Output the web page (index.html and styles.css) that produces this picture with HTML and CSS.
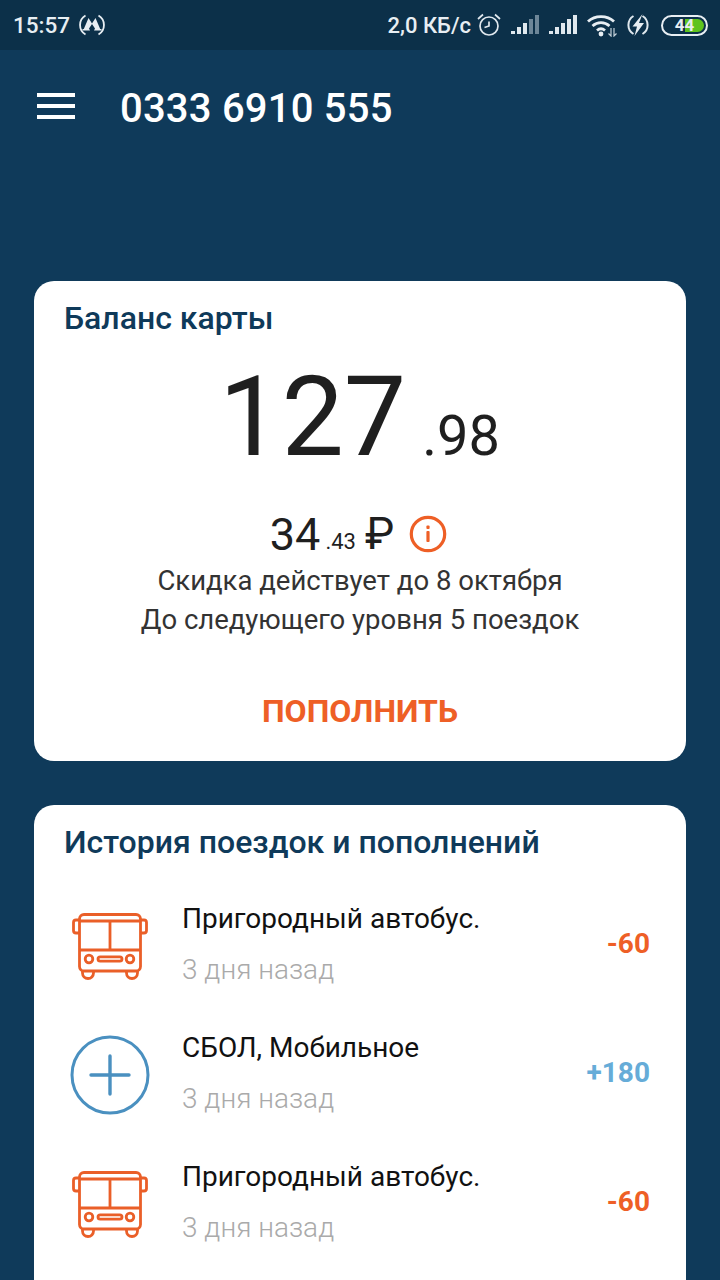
FILE: index.html
```html
<!DOCTYPE html>
<html lang="ru">
<head>
<meta charset="utf-8">
<title>Баланс карты</title>
<link rel="stylesheet" href="styles.css">
</head>
<body>
<div class="screen">
  <div class="status">
    <span class="time">15:57</span>
    <svg class="metro" width="28" height="24" viewBox="0 0 28 24"><path d="M7.500 2.500A11 11 0 0 0 7.500 21.500M20.500 2.500A11 11 0 0 1 20.500 21.500" fill="none" stroke="#e8eef3" stroke-width="1.800"/><path d="M4.500 17.500h7.500l-1-2 3-4.500 3 4.500-1 2h7.500v-1.500h-1.300L17.500 5 14 10.500 10.500 5 5.800 16H4.500z" fill="#e8eef3"/></svg>
    <span class="spacer"></span>
    <span class="speed">2,0 КБ/с</span>
    <svg class="ic-alarm" width="26" height="26" viewBox="0 0 26 26"><circle cx="13" cy="14" r="9" fill="none" stroke="#e0e8ee" stroke-width="1.700"/><path d="M13 9.500v4.500l-4.500 1.500M2 7L7 2.500M24 7L19 2.500" fill="none" stroke="#e0e8ee" stroke-width="1.700"/></svg>
    <svg class="ic-signal1" width="28" height="20" viewBox="0 0 28 20"><g fill="#e0e8ee"><rect x="0" y="16" width="4" height="3"/><rect x="6" y="12" width="4" height="7"/><rect x="12" y="8" width="4" height="11"/></g><g fill="#6d8698"><rect x="18" y="4" width="4" height="15"/><rect x="24" y="0" width="4" height="19"/></g></svg>
    <svg class="ic-signal2" width="28" height="20" viewBox="0 0 28 20"><g fill="#e0e8ee"><rect x="0" y="16" width="4" height="3"/><rect x="6" y="12" width="4" height="7"/><rect x="12" y="8" width="4" height="11"/><rect x="18" y="4" width="4" height="15"/><rect x="24" y="0" width="4" height="19"/></g></svg>
    <svg class="ic-wifi" width="30" height="24" viewBox="0 0 30 24"><path d="M1 8.500C8 2 20 2 27 8.500M5.500 13C10.500 8.500 17.500 8.500 22.500 13M10 17.500c2.800-2.400 5.200-2.400 8 0" fill="none" stroke="#e8eef3" stroke-width="2.800"/><circle cx="14" cy="21" r="2.400" fill="#e8eef3"/><path d="M24 15v8l-2.500-2.500M27 15v8l2.500-2.500" fill="none" stroke="#c4d0d9" stroke-width="1.200"/></svg>
    <svg class="ic-charge" width="24" height="24" viewBox="0 0 24 24"><path d="M7.500 3A10.500 10.500 0 0 0 7.500 21M16.500 3A10.500 10.500 0 0 1 16.500 21" fill="none" stroke="#e0e8ee" stroke-width="2"/><path d="M16.500 1L6.500 13.500h4.500L8.500 23l9.500-13h-5z" fill="#e8eef3"/></svg>
    <span class="battery"><span class="battery-fill"></span><span class="battery-num">44</span></span>
  </div>

  <header class="appbar">
    <span class="burger"><i></i><i></i><i></i></span>
    <h1 class="number">0333 6910 555</h1>
  </header>

  <section class="card balance">
    <h2 class="card-title">Баланс карты</h2>
    <div class="amount"><span class="amount-main">127</span><span class="amount-frac">.98</span></div>
    <div class="rate">
      <span class="rate-main">34</span><span class="rate-frac">.43</span><span class="rate-cur">₽</span>
      <svg class="info" width="38" height="38" viewBox="0 0 38 38"><circle cx="19" cy="19" r="16.700" fill="none" stroke="#ee5f26" stroke-width="3.200"/><rect x="17.400" y="10.500" width="3.200" height="3.500" rx="1" fill="#ee5f26"/><rect x="17.400" y="16" width="3.200" height="11" rx="1" fill="#ee5f26"/></svg>
    </div>
    <p class="note">Скидка действует до 8 октября</p>
    <p class="note">До следующего уровня 5 поездок</p>
    <div class="topup">ПОПОЛНИТЬ</div>
  </section>

  <section class="card history">
    <h2 class="card-title">История поездок и пополнений</h2>
    <ul class="list">
      <li class="row">
        <svg class="row-icon" width="80" height="80" viewBox="0 0 80 80"><use href="#bus"/></svg>
        <div class="row-text"><div class="row-name">Пригородный автобус.</div><div class="row-date">3 дня назад</div></div>
        <div class="row-sum minus">-60</div>
      </li>
      <li class="row">
        <svg class="row-icon" width="80" height="80" viewBox="0 0 80 80"><circle cx="40" cy="40" r="38" fill="none" stroke="#4a90c0" stroke-width="3"/><path d="M21 40h38M40 21v38" fill="none" stroke="#4a90c0" stroke-width="3.400" stroke-linecap="round"/></svg>
        <div class="row-text"><div class="row-name">СБОЛ, Мобильное</div><div class="row-date">3 дня назад</div></div>
        <div class="row-sum plus">+180</div>
      </li>
      <li class="row">
        <svg class="row-icon" width="80" height="80" viewBox="0 0 80 80"><use href="#bus"/></svg>
        <div class="row-text"><div class="row-name">Пригородный автобус.</div><div class="row-date">3 дня назад</div></div>
        <div class="row-sum minus">-60</div>
      </li>
    </ul>
  </section>
</div>
<svg class="defs" width="0" height="0"><defs><g id="bus" fill="none" stroke="#ea5f28" stroke-width="2.800"><path d="M9.500 13V13a4.500 4.500 0 0 1 4.500-4.500h52A4.500 4.500 0 0 1 70.500 13v47.500a4.500 4.500 0 0 1-4.500 4.500H14a4.500 4.500 0 0 1-4.500-4.500z"/><path d="M9.500 15h61M40 15v29M9.500 44h61"/><path d="M9.500 14H6a2.500 2.500 0 0 0-2.500 2.500v8A2.500 2.500 0 0 0 6 27h3.500M70.500 14H74a2.500 2.500 0 0 1 2.500 2.500v8A2.500 2.500 0 0 1 74 27h-3.500"/><circle cx="19" cy="53" r="3.800"/><circle cx="60" cy="53" r="3.800"/><rect x="28" y="50.800" width="24" height="4.400" rx="2.200"/><path d="M12.500 65v2a5.500 5.500 0 0 0 11 0v-2M56.500 65v2a5.500 5.500 0 0 0 11 0v-2"/></g></defs></svg>
</body>
</html>
```
FILE: styles.css
```css
* { box-sizing: border-box; }
html, body { margin: 0; padding: 0; }
body { background: #0f3a5a; font-family: Roboto, "Liberation Sans", sans-serif; overflow: hidden; }
.screen { width: 720px; height: 1280px; overflow: hidden; background: #0f3a5a; }
.defs { display: block; }

.status { height: 50px; background: #0c3049; display: flex; align-items: center; padding: 0 12px 0 13px; color: #e8eef3; }
.time { font-size: 22.500px; font-weight: 500; }
.metro { margin-left: 8px; }
.spacer { flex: 1; }
.speed { font-size: 22px; font-weight: 500; }
.ic-alarm { margin-left: 5px; }
.ic-signal1 { margin-left: 9px; }
.ic-signal2 { margin-left: 10px; }
.ic-wifi { margin-left: 10px; }
.ic-charge { margin-left: 9px; }
.battery { position: relative; margin-left: 11px; width: 47px; height: 21px; border: 2px solid #e8eef3; border-radius: 11px; overflow: hidden; display: block; }
.battery-fill { position: absolute; left: 22px; top: 2px; bottom: 2px; right: 2px; background: #5fc31e; border-radius: 0 8px 8px 0; }
.battery-num { position: absolute; left: 0; right: 0; top: 0; bottom: 0; text-align: center; font-size: 17px; line-height: 17px; font-weight: 700; color: #e8eef3; }

.appbar { height: 115px; display: flex; align-items: center; padding-left: 37px; }
.burger { width: 38px; display: flex; flex-direction: column; gap: 7px; margin-top: -4px; }
.burger i { display: block; height: 4px; background: #fff; }
.number { margin: 2px 0 0 45px; font-size: 40px; font-weight: 500; color: #fff; letter-spacing: .2px; }

.card { margin: 0 34px; background: #fff; border-radius: 20px; }
.balance { margin-top: 116px; height: 480px; padding: 20px 30px 0; text-align: center; }
.card-title { margin: 0; font-size: 32px; line-height: 35px; font-weight: 500; color: #0f3a5a; text-align: left; }
.amount { margin-top: 26px; height: 110px; line-height: 110px; color: #1f1f1f; white-space: nowrap; padding-right: 1px; }
.amount-main { font-size: 111px; font-weight: 400; }
.amount-frac { font-size: 56px; font-weight: 400; margin-left: 16px; }
.rate { margin-top: 39px; height: 46px; display: flex; justify-content: center; align-items: center; color: #1f1f1f; padding-right: 3px; }
.rate-main { font-size: 45px; font-weight: 400; }
.rate-frac { font-size: 22px; font-weight: 400; margin: 14px 0 0 5px; }
.rate-cur { font-size: 44px; line-height: 46px; margin-left: 9px; }
.info { margin-left: 15px; }
.note { margin: 0; font-size: 27.500px; line-height: 38.500px; font-weight: 400; color: #333; }
.note:first-of-type { margin-top: 5px; }
.topup { margin-top: 52px; font-size: 32px; line-height: 40px; font-weight: 700; color: #ee5f26; }

.history { margin-top: 44px; height: 600px; padding: 20px 36px 0 36px; }
.history .card-title { margin-left: -6px; }
.list { list-style: none; margin: 21px 0 0; padding: 0; }
.row { height: 129px; display: flex; align-items: center; }
.row-icon { flex: none; }
.row-text { flex: 1; margin-left: 32px; margin-top: -2px; }
.row-name { font-size: 28px; line-height: 42px; color: #111; }
.row-date { margin-top: 9px; font-size: 28px; line-height: 42px; font-weight: 300; color: #aaa; }
.row-sum { font-size: 28px; font-weight: 700; margin-top: -4px; }
.minus { color: #ee5f26; }
.plus { color: #66acd8; }
```
